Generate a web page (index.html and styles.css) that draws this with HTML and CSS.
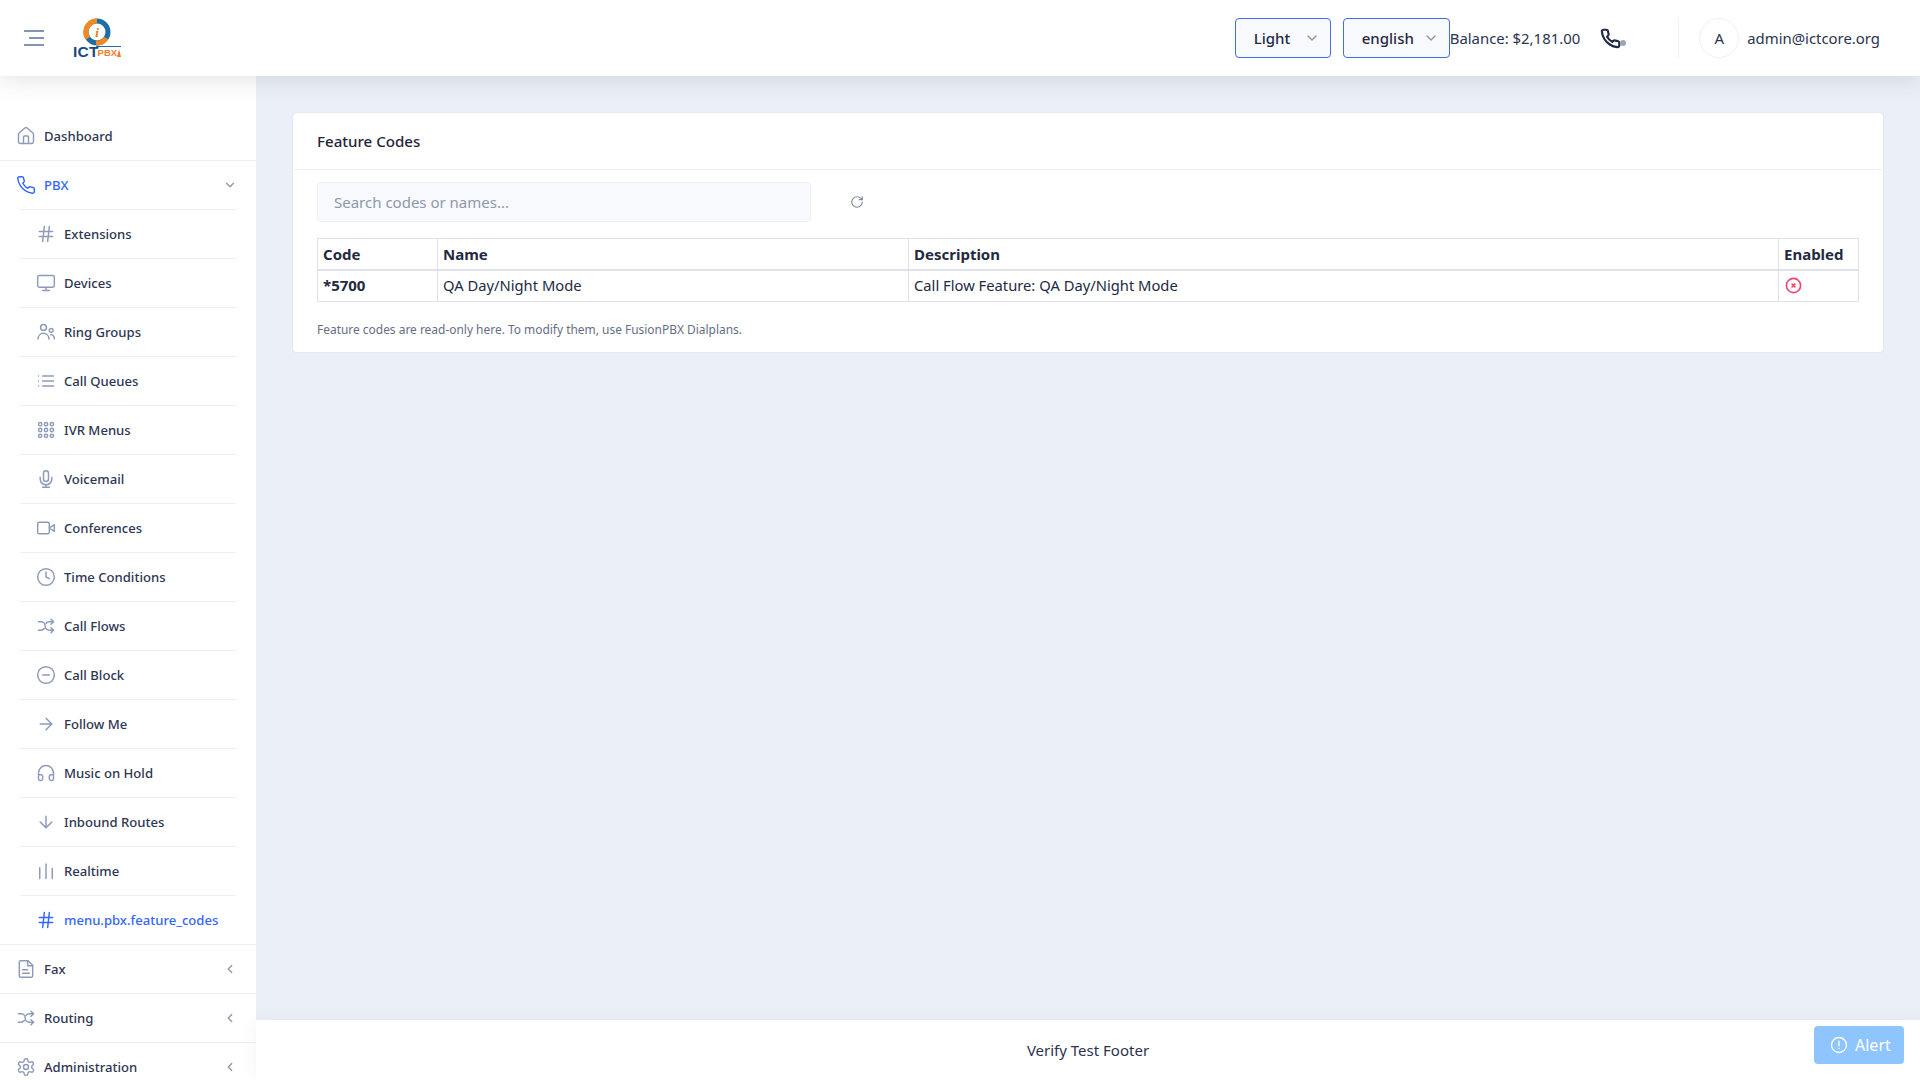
FILE: index.html
```html
<!DOCTYPE html>
<html lang="en">
<head>
<meta charset="utf-8">
<title>Feature Codes</title>
<link rel="stylesheet" href="styles.css">
</head>
<body>
<svg class="sprite" aria-hidden="true">
  <symbol id="i-home" viewBox="0 0 24 24"><path d="M15 21v-8a1 1 0 0 0-1-1h-4a1 1 0 0 0-1 1v8"/><path d="M3 10a2 2 0 0 1 .709-1.528l7-5.999a2 2 0 0 1 2.582 0l7 5.999A2 2 0 0 1 21 10v9a2 2 0 0 1-2 2H5a2 2 0 0 1-2-2z"/></symbol>
  <symbol id="i-phone" viewBox="0 0 24 24"><path d="M22 16.92v3a2 2 0 0 1-2.18 2 19.79 19.79 0 0 1-8.63-3.07 19.5 19.5 0 0 1-6-6 19.79 19.79 0 0 1-3.07-8.67A2 2 0 0 1 4.11 2h3a2 2 0 0 1 2 1.72 12.84 12.84 0 0 0 .7 2.81 2 2 0 0 1-.45 2.11L8.09 9.91a16 16 0 0 0 6 6l1.27-1.27a2 2 0 0 1 2.11-.45 12.84 12.84 0 0 0 2.81.7A2 2 0 0 1 22 16.92z"/></symbol>
  <symbol id="i-hash" viewBox="0 0 24 24"><path d="M4 9h16M4 15h16M10 3 8 21M16 3l-2 18"/></symbol>
  <symbol id="i-monitor" viewBox="0 0 24 24"><rect x="2" y="3" width="20" height="14" rx="2"/><path d="M8 21h8M12 17v4"/></symbol>
  <symbol id="i-users" viewBox="0 0 24 24"><circle cx="9" cy="6.5" r="3.5"/><path d="M2.5 20.5c0-4 2.8-7 6.5-7s6.5 3 6.5 7"/><circle cx="18.2" cy="10" r="2.3"/><path d="M17.5 15.2c2.6-.3 4.5 1.8 4.5 5"/></symbol>
  <symbol id="i-list" viewBox="0 0 24 24"><path d="M8 6h13M8 12h13M8 18h13M3 6h.01M3 12h.01M3 18h.01"/></symbol>
  <symbol id="i-grid" viewBox="0 0 24 24"><circle cx="5" cy="5" r="2"/><circle cx="12" cy="5" r="2"/><circle cx="19" cy="5" r="2"/><circle cx="5" cy="12" r="2"/><circle cx="12" cy="12" r="2"/><circle cx="19" cy="12" r="2"/><circle cx="5" cy="19" r="2"/><circle cx="12" cy="19" r="2"/><circle cx="19" cy="19" r="2"/></symbol>
  <symbol id="i-mic" viewBox="0 0 24 24"><rect x="9" y="2" width="6" height="13" rx="3"/><path d="M19 10v2a7 7 0 0 1-14 0v-2M12 19v3M8 22h8"/></symbol>
  <symbol id="i-video" viewBox="0 0 24 24"><rect x="2" y="5" width="14" height="14" rx="2"/><path d="m22 8-6 4 6 4V8z"/></symbol>
  <symbol id="i-clock" viewBox="0 0 24 24"><circle cx="12" cy="12" r="10"/><path d="M12 6v6l4 2"/></symbol>
  <symbol id="i-shuffle" viewBox="0 0 24 24"><path d="m18 4 3 3-3 3M18 20l3-3-3-3"/><path d="M3 7h3a5 5 0 0 1 5 5 5 5 0 0 0 5 5h5"/><path d="M21 7h-5a4.9 4.9 0 0 0-4 2"/><path d="M3 17h3a4.9 4.9 0 0 0 4-2"/></symbol>
  <symbol id="i-minus" viewBox="0 0 24 24"><circle cx="12" cy="12" r="10"/><path d="M8 12h8"/></symbol>
  <symbol id="i-right" viewBox="0 0 24 24"><path d="M5 12h14M12 5l7 7-7 7"/></symbol>
  <symbol id="i-head" viewBox="0 0 24 24"><path d="M3 14h3a2 2 0 0 1 2 2v3a2 2 0 0 1-2 2H5a2 2 0 0 1-2-2v-7a9 9 0 0 1 18 0v7a2 2 0 0 1-2 2h-1a2 2 0 0 1-2-2v-3a2 2 0 0 1 2-2h3"/></symbol>
  <symbol id="i-down" viewBox="0 0 24 24"><path d="M12 5v14M19 12l-7 7-7-7"/></symbol>
  <symbol id="i-bars" viewBox="0 0 24 24"><path d="M4.5 21V8M12 21V3.5M19.5 21V9"/></symbol>
  <symbol id="i-file" viewBox="0 0 24 24"><path d="M14.5 2H6a2 2 0 0 0-2 2v16a2 2 0 0 0 2 2h12a2 2 0 0 0 2-2V7.5L14.5 2z"/><path d="M14 2v6h6M8 13h6M8 17h8"/></symbol>
  <symbol id="i-cog" viewBox="0 0 24 24"><path d="M12.22 2h-.44a2 2 0 0 0-2 2v.18a2 2 0 0 1-1 1.73l-.43.25a2 2 0 0 1-2 0l-.15-.08a2 2 0 0 0-2.73.73l-.22.38a2 2 0 0 0 .73 2.73l.15.1a2 2 0 0 1 1 1.72v.51a2 2 0 0 1-1 1.74l-.15.09a2 2 0 0 0-.73 2.73l.22.38a2 2 0 0 0 2.73.73l.15-.08a2 2 0 0 1 2 0l.43.25a2 2 0 0 1 1 1.73V20a2 2 0 0 0 2 2h.44a2 2 0 0 0 2-2v-.18a2 2 0 0 1 1-1.73l.43-.25a2 2 0 0 1 2 0l.15.08a2 2 0 0 0 2.73-.73l.22-.39a2 2 0 0 0-.73-2.73l-.15-.08a2 2 0 0 1-1-1.74v-.5a2 2 0 0 1 1-1.74l.15-.09a2 2 0 0 0 .73-2.73l-.22-.38a2 2 0 0 0-2.73-.73l-.15.08a2 2 0 0 1-2 0l-.43-.25a2 2 0 0 1-1-1.73V4a2 2 0 0 0-2-2z"/><circle cx="12" cy="12" r="3"/></symbol>
  <symbol id="i-chev-d" viewBox="0 0 24 24"><path d="m6 9 6 6 6-6"/></symbol>
  <symbol id="i-chev-l" viewBox="0 0 24 24"><path d="m15 18-6-6 6-6"/></symbol>
  <symbol id="i-refresh" viewBox="0 0 24 24"><path d="M21 12a9 9 0 1 1-9-9c2.52 0 4.93 1 6.74 2.74L21 8"/><path d="M21 3v5h-5"/></symbol>
  <symbol id="i-xc" viewBox="0 0 24 24"><circle cx="12" cy="12" r="10"/><path d="m14 10-4 4M10 10l4 4"/></symbol>
  <symbol id="i-alert" viewBox="0 0 24 24"><circle cx="12" cy="12" r="10"/><path d="M12 7v6M12 16.5h.01"/></symbol>
  <symbol id="i-menu" viewBox="0 0 24 24"><path d="M2 5h20M3 12h.01M7 12h15M2 19h20"/></symbol>
</svg>

<div class="app">
  <header class="topbar">
    <button class="hamburger" type="button" aria-label="Menu"><svg class="ic-menu"><use href="#i-menu"/></svg></button>
    <div class="logo">
      <svg class="logo-mark" viewBox="0 0 28 28" aria-hidden="true">
        <circle class="logo-blue" cx="14" cy="14" r="11"/>
        <path class="logo-orange" d="M14 3A11 11 0 0 0 5 20.3"/>
        <path class="logo-orange" d="M13 25a11 11 0 0 0 10-5"/>
        <circle class="logo-core" cx="14" cy="14" r="6.5"/>
        <text class="logo-i" x="14" y="18.5">i</text>
      </svg>
      <div class="logo-text"><span class="logo-ict">ICT</span><span class="logo-pbx">PBX</span></div>
    </div>
    <div class="topbar-right">
      <div class="select select-theme"><span>Light</span><svg class="ic-chev"><use href="#i-chev-d"/></svg></div>
      <div class="select select-lang"><span>english</span><svg class="ic-chev"><use href="#i-chev-d"/></svg></div>
      <span class="balance">Balance: $2,181.00</span>
      <div class="softphone"><svg class="ic-softphone"><use href="#i-phone"/></svg><span class="status-dot"></span></div>
      <div class="divider"></div>
      <div class="avatar">A</div>
      <span class="user">admin@ictcore.org</span>
    </div>
  </header>

  <div class="body">
    <nav class="sidebar">
      <a class="item"><svg class="ic"><use href="#i-home"/></svg><span>Dashboard</span></a>
      <a class="item open active"><svg class="ic"><use href="#i-phone"/></svg><span>PBX</span><svg class="ic-caret"><use href="#i-chev-d"/></svg></a>
      <div class="submenu">
        <a class="item"><svg class="ic"><use href="#i-hash"/></svg><span>Extensions</span></a>
        <a class="item"><svg class="ic"><use href="#i-monitor"/></svg><span>Devices</span></a>
        <a class="item"><svg class="ic"><use href="#i-users"/></svg><span>Ring Groups</span></a>
        <a class="item"><svg class="ic"><use href="#i-list"/></svg><span>Call Queues</span></a>
        <a class="item"><svg class="ic"><use href="#i-grid"/></svg><span>IVR Menus</span></a>
        <a class="item"><svg class="ic"><use href="#i-mic"/></svg><span>Voicemail</span></a>
        <a class="item"><svg class="ic"><use href="#i-video"/></svg><span>Conferences</span></a>
        <a class="item"><svg class="ic"><use href="#i-clock"/></svg><span>Time Conditions</span></a>
        <a class="item"><svg class="ic"><use href="#i-shuffle"/></svg><span>Call Flows</span></a>
        <a class="item"><svg class="ic"><use href="#i-minus"/></svg><span>Call Block</span></a>
        <a class="item"><svg class="ic"><use href="#i-right"/></svg><span>Follow Me</span></a>
        <a class="item"><svg class="ic"><use href="#i-head"/></svg><span>Music on Hold</span></a>
        <a class="item"><svg class="ic"><use href="#i-down"/></svg><span>Inbound Routes</span></a>
        <a class="item"><svg class="ic"><use href="#i-bars"/></svg><span>Realtime</span></a>
        <a class="item active"><svg class="ic"><use href="#i-hash"/></svg><span>menu.pbx.feature_codes</span></a>
      </div>
      <a class="item"><svg class="ic"><use href="#i-file"/></svg><span>Fax</span><svg class="ic-caret"><use href="#i-chev-l"/></svg></a>
      <a class="item"><svg class="ic"><use href="#i-shuffle"/></svg><span>Routing</span><svg class="ic-caret"><use href="#i-chev-l"/></svg></a>
      <a class="item"><svg class="ic"><use href="#i-cog"/></svg><span>Administration</span><svg class="ic-caret"><use href="#i-chev-l"/></svg></a>
    </nav>

    <div class="main">
      <main class="content">
        <section class="card">
          <h1 class="card-title">Feature Codes</h1>
          <div class="card-body">
            <div class="toolbar">
              <input class="search" type="text" placeholder="Search codes or names...">
              <button class="refresh" type="button" aria-label="Refresh"><svg class="ic-refresh"><use href="#i-refresh"/></svg></button>
            </div>
            <table class="codes">
              <thead>
                <tr><th class="col-code">Code</th><th class="col-name">Name</th><th class="col-desc">Description</th><th class="col-en">Enabled</th></tr>
              </thead>
              <tbody>
                <tr><td class="code">*5700</td><td>QA Day/Night Mode</td><td>Call Flow Feature: QA Day/Night Mode</td><td><svg class="ic-off"><use href="#i-xc"/></svg></td></tr>
              </tbody>
            </table>
            <p class="note">Feature codes are read-only here. To modify them, use FusionPBX Dialplans.</p>
          </div>
        </section>
      </main>
      <footer class="footer">Verify Test Footer</footer>
    </div>
  </div>
  <button class="alert" type="button"><svg class="ic-alert"><use href="#i-alert"/></svg>Alert</button>
</div>
</body>
</html>
```

FILE: styles.css
```css
* { box-sizing: border-box; }
html, body { margin: 0; height: 100%; }
body {
  font-family: "Noto Sans", "Open Sans", sans-serif;
  color: #2b3350;
  background: #ebeff7;
  overflow: hidden;
}
.sprite { display: none; }
svg { fill: none; stroke: currentColor; stroke-width: 1.75; stroke-linecap: round; stroke-linejoin: round; flex: none; }

.app { position: relative; display: flex; flex-direction: column; height: 100vh; }

/* top bar */
.topbar {
  position: relative;
  z-index: 3;
  flex: none;
  display: flex;
  align-items: center;
  height: 76px;
  padding: 0 40px 0 22px;
  background: #fff;
  box-shadow: 0 2px 24px rgba(50, 60, 90, .16);
}
.hamburger { display: flex; padding: 0; border: 0; background: none; color: #8793b2; }
.ic-menu { width: 24px; height: 24px; stroke-width: 2; stroke-linecap: butt; }
.logo { display: flex; flex-direction: column; align-items: flex-start; width: 50px; height: 40px; margin-left: 26px; }
.logo-mark { width: 28px; height: 28px; margin-left: 11px; }
.logo-blue { stroke: #1c6ea8; stroke-width: 5; }
.logo-orange { stroke: #f28a1e; stroke-width: 5; stroke-linecap: butt; }
.logo-core { fill: #fff; stroke: none; }
.logo-i { fill: #e9781c; stroke: none; font-family: "Liberation Serif", serif; font-style: italic; font-weight: 700; font-size: 13px; text-anchor: middle; }
.logo-text { display: flex; align-items: flex-end; height: 12px; margin-left: 1px; line-height: 12px; white-space: nowrap; }
.logo-ict { font-family: "Liberation Sans", sans-serif; font-weight: 700; font-size: 15.5px; letter-spacing: .2px; color: #174a85; }
.logo-pbx { position: relative; height: 12px; margin-left: -3px; padding: 1px 4px 0 2px; border-top: 1px solid #2a6aa6; font-family: "Liberation Sans", sans-serif; font-weight: 700; font-size: 9.5px; line-height: 10px; color: #ef7d2a; }
.logo-pbx::after { content: ""; position: absolute; right: 0; bottom: 1px; border-left: 2px solid transparent; border-right: 2px solid transparent; border-bottom: 8px solid #ef7d2a; }

.topbar-right { display: flex; align-items: center; margin-left: auto; }
.select {
  display: flex;
  align-items: center;
  height: 40px;
  padding-left: 18px;
  border: 1px solid #3d6fe6;
  border-radius: 4px;
  background: #f8f9fd;
  font-size: 15px;
  font-weight: 500;
  color: #232a42;
}
.select span { flex: 1; }
.select-theme { width: 96px; margin-right: 12px; }
.select-lang { width: 107px; }
.ic-chev { width: 16px; height: 16px; margin-right: 10px; color: #8d96ad; stroke-width: 2; }
.balance { font-size: 14.9px; white-space: nowrap; }
.softphone { position: relative; display: flex; margin-left: 20px; color: #232a42; }
.ic-softphone { width: 21px; height: 21px; stroke-width: 2.5; }
.status-dot { position: absolute; right: -5px; bottom: 3px; width: 6px; height: 6px; border-radius: 50%; background: #9aa3b8; }
.divider { width: 1px; height: 40px; margin: 0 20px 0 57px; background: #eef0f6; }
.avatar { display: flex; align-items: center; justify-content: center; width: 40px; height: 40px; border: 1px solid #eef0f6; border-radius: 50%; font-size: 15px; }
.user { margin-left: 8px; font-size: 14.9px; white-space: nowrap; }

/* body */
.body { flex: 1; min-height: 0; display: flex; }

/* sidebar */
.sidebar {
  flex: none;
  width: 256px;
  padding-top: 36px;
  background: #fff;
  overflow: hidden;
}
.item {
  display: flex;
  align-items: center;
  gap: 8px;
  height: 49px;
  padding: 0 16px;
  border-bottom: 1px solid #eceff7;
  font-size: 13.1px;
  font-weight: 500;
  color: #2e3653;
  white-space: nowrap;
}
.item span { flex: 1; }
.item.open { border-bottom: 0; height: 48px; }
.ic { width: 20px; height: 20px; color: #8d9ab8; }
.ic-caret { width: 14px; height: 14px; margin-right: 3px; color: #8d96ad; stroke-width: 2.25; }
.item.active, .item.active .ic { color: #3366ff; }
.submenu { border-bottom: 1px solid #eceff7; }
.submenu .item { margin: 0 20px; border-bottom: 0; border-top: 1px solid #eceff7; }

/* main */
.main { flex: 1; min-width: 0; display: flex; flex-direction: column; }
.content { flex: 1; min-height: 0; padding: 37px 37px 0; }
.card {
  border-radius: 4px;
  background: #fff;
  box-shadow: 0 0 2px rgba(60, 70, 110, .12);
}
.card-title {
  margin: 0;
  height: 57px;
  padding: 0 24px;
  border-bottom: 1px solid #edf0f6;
  font-size: 15.1px;
  font-weight: 500;
  line-height: 57px;
  color: #1f2539;
}
.card-body { padding: 12px 24px 0; height: 182px; }
.toolbar { display: flex; align-items: center; }
.search {
  width: 494px;
  height: 40px;
  padding: 0 16px;
  border: 1px solid #edf0f7;
  border-radius: 4px;
  background: #f8f9fd;
  font: 15px "Noto Sans", sans-serif;
  color: #2b3350;
}
.search::placeholder { color: #8f97aa; }
.refresh { display: flex; margin-left: 39px; padding: 0; border: 0; background: none; color: #7f889e; }
.ic-refresh { width: 14px; height: 14px; stroke-width: 2; }

.codes {
  width: 1541px;
  margin-top: 16px;
  border-collapse: collapse;
  table-layout: fixed;
  font-size: 14.75px;
  color: #232a42;
}
.codes th, .codes td { height: 32px; padding: 0 5px 1px; border: 1px solid #dfe2ea; text-align: left; vertical-align: middle; }
.codes th { height: 31px; padding-bottom: 0; border-bottom-width: 2px; font-size: 15px; font-weight: 700; }
.col-code { width: 120px; }
.col-name { width: 471px; }
.col-desc { width: 870px; }
.col-en { width: 80px; }
td.code { font-size: 15px; font-weight: 700; }
.ic-off { display: block; width: 17px; height: 17px; margin-left: 1px; color: #f1416c; stroke-width: 2.25; }
.note { margin: 19px 0 0; font-size: 11.95px; line-height: 18px; color: #666e82; }

/* footer */
.footer {
  position: relative;
  z-index: 2;
  flex: none;
  display: flex;
  align-items: center;
  justify-content: center;
  height: 60px;
  background: #fff;
  box-shadow: 0 0 16px rgba(50, 60, 90, .06);
  font-size: 15px;
  color: #2b3350;
}

.alert {
  position: absolute;
  right: 16px;
  bottom: 16px;
  z-index: 4;
  display: flex;
  align-items: center;
  gap: 7px;
  width: 90px;
  height: 38px;
  padding: 0 0 0 16px;
  border: 0;
  border-radius: 4px;
  background: #8ec5ff;
  font: 16px "Noto Sans", sans-serif;
  color: #fff;
}
.ic-alert { width: 18px; height: 18px; }
```
